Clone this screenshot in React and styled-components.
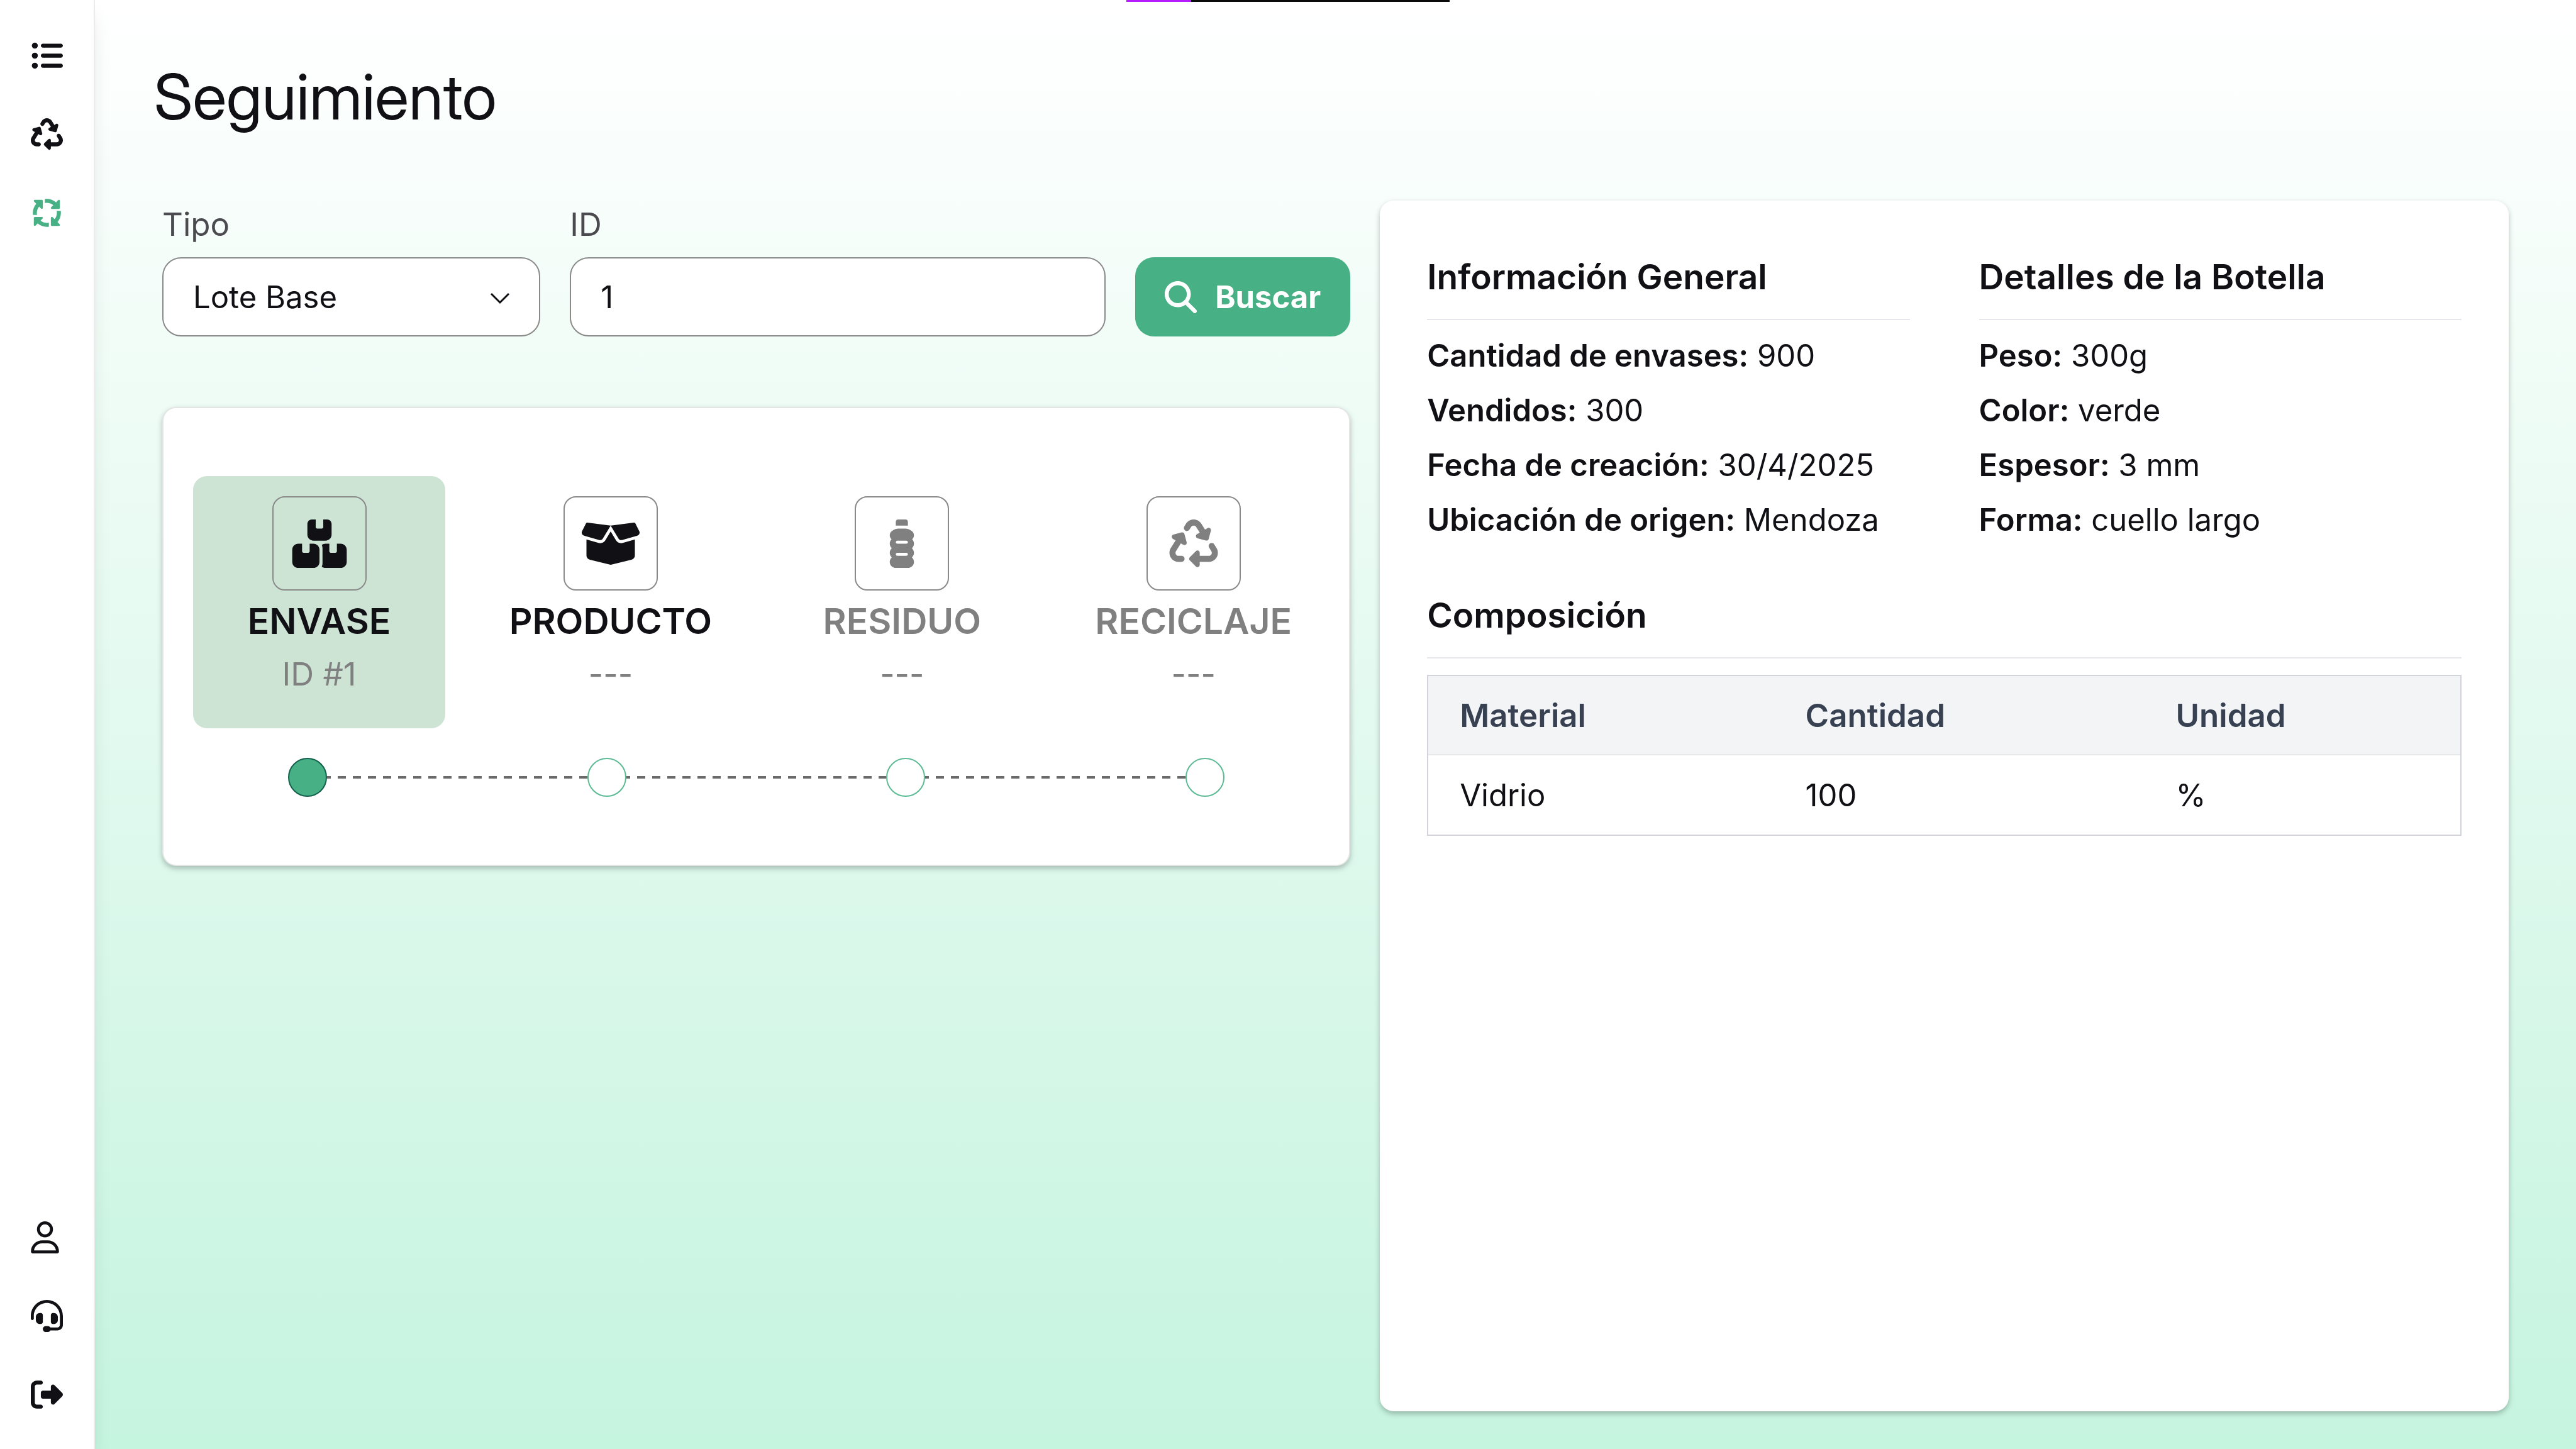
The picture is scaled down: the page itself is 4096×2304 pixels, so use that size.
import React, { useState } from "react";
import styled, { createGlobalStyle } from "styled-components";
import {
  FaArrowsSpin,
  FaBottleWater,
  FaBoxesStacked,
  FaBoxOpen,
  FaHeadset,
  FaListUl,
  FaMagnifyingGlass,
  FaRecycle,
  FaRegUser,
  FaRightFromBracket,
} from "react-icons/fa6";

const color = {
  ink: "#111015",
  label: "#4b4b4f",
  muted: "#808080",
  green: "#47b085",
  greenDark: "#12604c",
  tile: "#cde4d5",
  rule: "#e5e7eb",
  outline: "#d1d5db",
  head: "#f3f4f6",
  headText: "#374151",
};

const GlobalStyle = createGlobalStyle`
  *, *::before, *::after { box-sizing: border-box; }
  body {
    margin: 0;
    color: ${color.ink};
    background: #fff;
    font-family: Inter, Roboto, "Liberation Sans", sans-serif;
    font-size: 49px;
  }
  h1, h2, p, ul, ol, dl, dd { margin: 0; padding: 0; }
  ul, ol { list-style: none; }
`;

const Page = styled.div`
  position: relative;
  display: flex;
  min-height: 100vh;
  background: linear-gradient(180deg, #ffffff 0%, #c5f4df 100%);
`;

const LoadingTrack = styled.div`
  position: absolute;
  top: 0;
  left: 0;
  right: 0;
  display: flex;
  justify-content: center;
`;

const LoadingBar = styled.div`
  width: 514px;
  height: 3px;
  background: linear-gradient(90deg, #b61cff 20%, #0a0a0a 20%);
`;

const Sidebar = styled.nav`
  flex: none;
  display: flex;
  flex-direction: column;
  justify-content: space-between;
  padding: 26px 0 24px;
  background: #fff;
  border-right: 2px solid #ececee;
  box-shadow: 0 21px 32px -6px rgba(0, 0, 0, 0.1), 0 9px 13px -9px rgba(0, 0, 0, 0.1);
`;

const NavLink = styled.a`
  display: block;
  padding: 37px 49px;
  color: ${(p) => (p.$active ? color.green : color.ink)};

  svg {
    display: block;
    width: ${(p) => (p.$narrow ? "45px" : "51px")};
    height: 51px;
  }
`;

const Main = styled.main`
  flex: 1;
  min-width: 0;
  display: flex;
  flex-direction: column;
  padding: 94px 107px 60px;
`;

const Title = styled.h1`
  margin: 0 -13px 105px;
  font-family: "Inter Display", Inter, Roboto, sans-serif;
  font-size: 100px;
  font-weight: 400;
  line-height: 120px;
`;

const Columns = styled.div`
  flex: 1;
  display: grid;
  grid-template-columns: minmax(0, 20fr) minmax(0, 19fr);
  gap: 47px;
`;

const Tracking = styled.div`
  display: flex;
  flex-direction: column;
  gap: 112px;
`;

const SearchForm = styled.form`
  display: grid;
  grid-template-columns: 12fr 17fr auto;
  align-items: end;
  gap: 47px;
`;

const Field = styled.div`
  display: flex;
  flex-direction: column;
  gap: 14px;
  min-width: 0;
`;

const FieldLabel = styled.label`
  color: ${color.label};
  font-size: 51px;
  line-height: 76px;
`;

const Control = styled.input`
  appearance: none;
  display: block;
  width: 100%;
  height: 126px;
  margin: 0;
  padding: 0 47px;
  color: inherit;
  background: #fff;
  border: 2px solid #8a8a8a;
  border-radius: 30px;
  outline: none;
  font-family: inherit;
  font-size: 49px;
`;

const SelectBox = styled.div`
  position: relative;

  svg {
    position: absolute;
    top: 0;
    bottom: 0;
    right: 47px;
    width: 34px;
    height: 100%;
    pointer-events: none;
  }
`;

const SearchButton = styled.button`
  display: flex;
  align-items: center;
  gap: 29px;
  height: 126px;
  padding: 0 47px;
  color: #fff;
  background: ${color.green};
  border: 0;
  border-radius: 30px;
  font-family: inherit;
  font-size: 49px;
  font-weight: 700;

  svg {
    width: 51px;
    height: 51px;
  }
`;

const Card = styled.section`
  background: #fff;
  border-radius: 22px;
  box-shadow: 0 4px 8px rgba(0, 0, 0, 0.25);
`;

const StagesCard = styled(Card)`
  padding: 108px 47px;
  border: 2px solid #e4e6e6;
`;

const Stages = styled.ol`
  display: flex;
  justify-content: space-between;
`;

const Stage = styled.li`
  display: flex;
  flex-direction: column;
  align-items: center;
  width: 401px;
  min-height: 401px;
  padding: 32px 0;
  border-radius: 22px;
  color: ${(p) => (p.$reached ? color.ink : color.muted)};
  background: ${(p) => (p.$active ? color.tile : "transparent")};
`;

const StageIcon = styled.span`
  display: flex;
  align-items: center;
  justify-content: center;
  width: 150px;
  height: 150px;
  border: 2px solid #8a8a8a;
  border-radius: 20px;

  svg {
    width: 100%;
    height: 77px;
  }
`;

const StageName = styled.span`
  margin-top: 14px;
  font-size: 57px;
  font-weight: 600;
  line-height: 70px;
`;

const StageId = styled.span`
  margin-top: 18px;
  color: ${color.muted};
  font-size: 51px;
  line-height: 62px;
`;

const Timeline = styled.div`
  display: flex;
  align-items: center;
  margin-top: 47px;
  padding: 0 151px;
`;

const Dot = styled.span`
  flex: none;
  width: 62px;
  height: 62px;
  border: 2px solid ${(p) => (p.$done ? color.greenDark : "#5cbb95")};
  border-radius: 50%;
  background: ${(p) => (p.$done ? color.green : "#fff")};
`;

const Dashes = styled.span`
  flex: 1;
  height: 4px;
  background: repeating-linear-gradient(90deg, #6a6a6a 0 13px, transparent 13px 24px);
  background-position: -7px 0;
`;

const DetailsCard = styled(Card)`
  padding: 75px;
`;

const DetailGrid = styled.div`
  display: grid;
  grid-template-columns: 1fr 1fr;
  gap: 110px;
  margin-bottom: 62px;
`;

const Heading = styled.h2`
  padding-bottom: 20px;
  border-bottom: 2px solid ${color.rule};
  font-size: 55px;
  font-weight: 600;
  line-height: 93px;
`;

const Facts = styled.ul`
  margin-top: 13px;
  line-height: 87px;

  strong {
    font-weight: 600;
  }
`;

const Materials = styled.table`
  width: 100%;
  margin-top: 26px;
  border: 2px solid ${color.outline};
  border-spacing: 0;
  text-align: left;

  th,
  td {
    padding: 26px 50px 24px;
  }

  th {
    color: ${color.headText};
    background: ${color.head};
    border-bottom: 2px solid ${color.rule};
    font-size: 51px;
    font-weight: 600;
    line-height: 74px;
  }

  td {
    font-size: 49px;
    line-height: 76px;
  }
`;

const mainLinks = [
  { label: "Listado", Icon: FaListUl },
  { label: "Reciclaje", Icon: FaRecycle },
  { label: "Seguimiento", Icon: FaArrowsSpin, active: true },
];

const accountLinks = [
  { label: "Perfil", Icon: FaRegUser, narrow: true },
  { label: "Soporte", Icon: FaHeadset },
  { label: "Salir", Icon: FaRightFromBracket },
];

const stages = [
  { name: "ENVASE", id: "ID #1", Icon: FaBoxesStacked, reached: true, active: true },
  { name: "PRODUCTO", id: "---", Icon: FaBoxOpen, reached: true },
  { name: "RESIDUO", id: "---", Icon: FaBottleWater },
  { name: "RECICLAJE", id: "---", Icon: FaRecycle },
];

const generalFacts = [
  ["Cantidad de envases:", "900"],
  ["Vendidos:", "300"],
  ["Fecha de creación:", "30/4/2025"],
  ["Ubicación de origen:", "Mendoza"],
];

const bottleFacts = [
  ["Peso:", "300g"],
  ["Color:", "verde"],
  ["Espesor:", "3 mm"],
  ["Forma:", "cuello largo"],
];

const materials = [{ material: "Vidrio", amount: "100", unit: "%" }];

function NavGroup({ links }) {
  return (
    <ul>
      {links.map(({ label, Icon, active, narrow }) => (
        <li key={label}>
          <NavLink href="#" aria-label={label} $active={active} $narrow={narrow}>
            <Icon />
          </NavLink>
        </li>
      ))}
    </ul>
  );
}

function FactList({ title, facts }) {
  return (
    <div>
      <Heading>{title}</Heading>
      <Facts>
        {facts.map(([name, value]) => (
          <li key={name}>
            <strong>{name}</strong> {value}
          </li>
        ))}
      </Facts>
    </div>
  );
}

export default function App() {
  const [kind, setKind] = useState("base");
  const [id, setId] = useState("1");

  return (
    <>
      <GlobalStyle />
      <Page>
        <Sidebar>
          <NavGroup links={mainLinks} />
          <NavGroup links={accountLinks} />
        </Sidebar>
        <Main>
          <Title>Seguimiento</Title>
          <Columns>
            <Tracking>
              <SearchForm onSubmit={(e) => e.preventDefault()}>
                <Field>
                  <FieldLabel htmlFor="tipo">Tipo</FieldLabel>
                  <SelectBox>
                    <Control as="select" id="tipo" value={kind} onChange={(e) => setKind(e.target.value)}>
                      <option value="base">Lote Base</option>
                    </Control>
                    <svg viewBox="0 0 34 34" fill="none" stroke={color.ink} strokeWidth="3">
                      <path d="M3 12 L17 26 L31 12" />
                    </svg>
                  </SelectBox>
                </Field>
                <Field>
                  <FieldLabel htmlFor="lote-id">ID</FieldLabel>
                  <Control id="lote-id" type="text" value={id} onChange={(e) => setId(e.target.value)} />
                </Field>
                <SearchButton type="submit">
                  <FaMagnifyingGlass />
                  Buscar
                </SearchButton>
              </SearchForm>
              <StagesCard>
                <Stages>
                  {stages.map(({ name, id: stageId, Icon, reached, active }) => (
                    <Stage key={name} $reached={reached} $active={active}>
                      <StageIcon>
                        <Icon />
                      </StageIcon>
                      <StageName>{name}</StageName>
                      <StageId>{stageId}</StageId>
                    </Stage>
                  ))}
                </Stages>
                <Timeline>
                  {stages.map(({ name, active }, i) => (
                    <React.Fragment key={name}>
                      {i > 0 && <Dashes />}
                      <Dot $done={active} />
                    </React.Fragment>
                  ))}
                </Timeline>
              </StagesCard>
            </Tracking>
            <DetailsCard>
              <DetailGrid>
                <FactList title="Información General" facts={generalFacts} />
                <FactList title="Detalles de la Botella" facts={bottleFacts} />
              </DetailGrid>
              <Heading>Composición</Heading>
              <Materials>
                <thead>
                  <tr>
                    <th>Material</th>
                    <th>Cantidad</th>
                    <th>Unidad</th>
                  </tr>
                </thead>
                <tbody>
                  {materials.map((row) => (
                    <tr key={row.material}>
                      <td>{row.material}</td>
                      <td>{row.amount}</td>
                      <td>{row.unit}</td>
                    </tr>
                  ))}
                </tbody>
              </Materials>
            </DetailsCard>
          </Columns>
        </Main>
        <LoadingTrack>
          <LoadingBar />
        </LoadingTrack>
      </Page>
    </>
  );
}
